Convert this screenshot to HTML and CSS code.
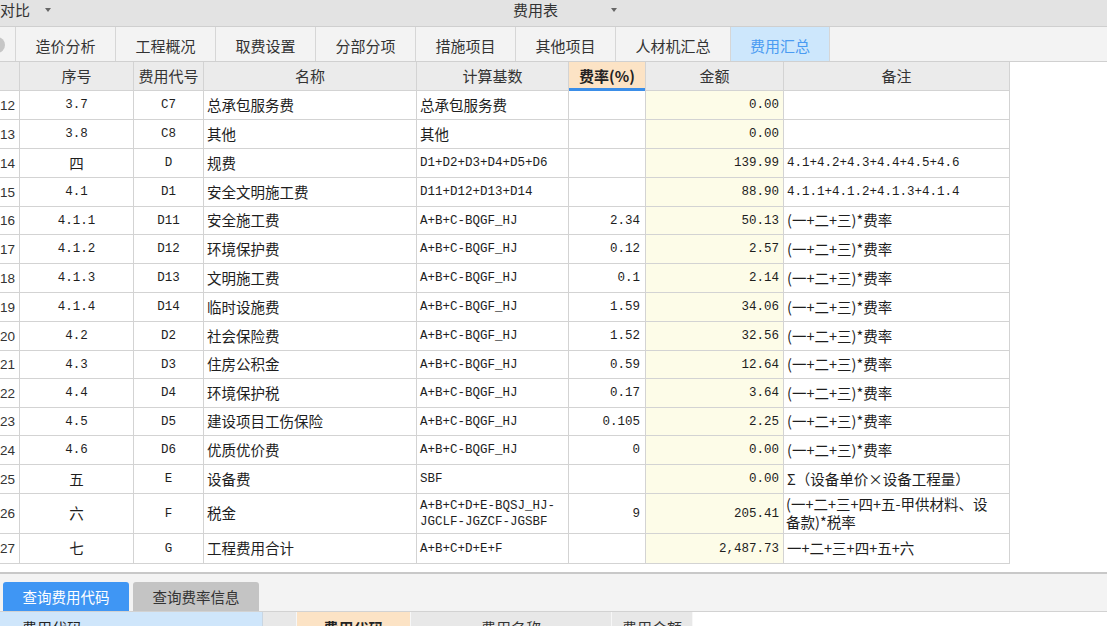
FILE: index.html
```html
<!DOCTYPE html>
<html lang="zh-CN">
<head>
<meta charset="utf-8">
<title>费用汇总</title>
<link rel="stylesheet" href="styles.css">
</head>
<body>
<div class="topbar">
  <div class="tb-sel a"><span>对比</span><i class="caret"></i></div>
  <div class="tb-sel b"><span>费用表</span><i class="caret"></i></div>
</div>
<div class="tabs">
  <div class="knob-cell"><i class="knob"></i></div>
  <div class="tab">造价分析</div>
  <div class="tab">工程概况</div>
  <div class="tab">取费设置</div>
  <div class="tab">分部分项</div>
  <div class="tab">措施项目</div>
  <div class="tab">其他项目</div>
  <div class="tab wide">人材机汇总</div>
  <div class="tab on">费用汇总</div>
</div>
<div class="sheet">
  <div class="h"></div><div class="h">序号</div><div class="h">费用代号</div><div class="h">名称</div><div class="h">计算基数</div><div class="h rate">费率(%)</div><div class="h">金额</div><div class="h">备注</div>

  <div class="n">12</div><div class="ctr m">3.7</div><div class="ctr m">C7</div><div class="l c">总承包服务费</div><div class="l c">总承包服务费</div><div class="r m"></div><div class="r m amt">0.00</div><div class="l c"></div>
  <div class="n">13</div><div class="ctr m">3.8</div><div class="ctr m">C8</div><div class="l c">其他</div><div class="l c">其他</div><div class="r m"></div><div class="r m amt">0.00</div><div class="l c"></div>
  <div class="n">14</div><div class="ctr c">四</div><div class="ctr m">D</div><div class="l c">规费</div><div class="l m">D1+D2+D3+D4+D5+D6</div><div class="r m"></div><div class="r m amt">139.99</div><div class="l m">4.1+4.2+4.3+4.4+4.5+4.6</div>
  <div class="n">15</div><div class="ctr m">4.1</div><div class="ctr m">D1</div><div class="l c">安全文明施工费</div><div class="l m">D11+D12+D13+D14</div><div class="r m"></div><div class="r m amt">88.90</div><div class="l m">4.1.1+4.1.2+4.1.3+4.1.4</div>
  <div class="n">16</div><div class="ctr m">4.1.1</div><div class="ctr m">D11</div><div class="l c">安全施工费</div><div class="l m">A+B+C-BQGF_HJ</div><div class="r m">2.34</div><div class="r m amt">50.13</div><div class="l c">(一+二+三)*费率</div>
  <div class="n">17</div><div class="ctr m">4.1.2</div><div class="ctr m">D12</div><div class="l c">环境保护费</div><div class="l m">A+B+C-BQGF_HJ</div><div class="r m">0.12</div><div class="r m amt">2.57</div><div class="l c">(一+二+三)*费率</div>
  <div class="n">18</div><div class="ctr m">4.1.3</div><div class="ctr m">D13</div><div class="l c">文明施工费</div><div class="l m">A+B+C-BQGF_HJ</div><div class="r m">0.1</div><div class="r m amt">2.14</div><div class="l c">(一+二+三)*费率</div>
  <div class="n">19</div><div class="ctr m">4.1.4</div><div class="ctr m">D14</div><div class="l c">临时设施费</div><div class="l m">A+B+C-BQGF_HJ</div><div class="r m">1.59</div><div class="r m amt">34.06</div><div class="l c">(一+二+三)*费率</div>
  <div class="n">20</div><div class="ctr m">4.2</div><div class="ctr m">D2</div><div class="l c">社会保险费</div><div class="l m">A+B+C-BQGF_HJ</div><div class="r m">1.52</div><div class="r m amt">32.56</div><div class="l c">(一+二+三)*费率</div>
  <div class="n">21</div><div class="ctr m">4.3</div><div class="ctr m">D3</div><div class="l c">住房公积金</div><div class="l m">A+B+C-BQGF_HJ</div><div class="r m">0.59</div><div class="r m amt">12.64</div><div class="l c">(一+二+三)*费率</div>
  <div class="n">22</div><div class="ctr m">4.4</div><div class="ctr m">D4</div><div class="l c">环境保护税</div><div class="l m">A+B+C-BQGF_HJ</div><div class="r m">0.17</div><div class="r m amt">3.64</div><div class="l c">(一+二+三)*费率</div>
  <div class="n">23</div><div class="ctr m">4.5</div><div class="ctr m">D5</div><div class="l c">建设项目工伤保险</div><div class="l m">A+B+C-BQGF_HJ</div><div class="r m">0.105</div><div class="r m amt">2.25</div><div class="l c">(一+二+三)*费率</div>
  <div class="n">24</div><div class="ctr m">4.6</div><div class="ctr m">D6</div><div class="l c">优质优价费</div><div class="l m">A+B+C-BQGF_HJ</div><div class="r m">0</div><div class="r m amt">0.00</div><div class="l c">(一+二+三)*费率</div>
  <div class="n">25</div><div class="ctr c">五</div><div class="ctr m">E</div><div class="l c">设备费</div><div class="l m">SBF</div><div class="r m"></div><div class="r m amt">0.00</div><div class="l c">Σ（设备单价×设备工程量）</div>
  <div class="n">26</div><div class="ctr c">六</div><div class="ctr m">F</div><div class="l c">税金</div><div class="l m wrap"><span>A+B+C+D+E-BQSJ_HJ-<br>JGCLF-JGZCF-JGSBF</span></div><div class="r m">9</div><div class="r m amt">205.41</div><div class="l c wrap"><span>(一+二+三+四+五-甲供材料、设<br>备款)*税率</span></div>
  <div class="n">27</div><div class="ctr c">七</div><div class="ctr m">G</div><div class="l c">工程费用合计</div><div class="l m">A+B+C+D+E+F</div><div class="r m"></div><div class="r m amt">2,487.73</div><div class="l c">一+二+三+四+五+六</div>
</div>
<div class="bottom">
  <div class="btabs">
    <div class="btab on">查询费用代码</div>
    <div class="btab off">查询费率信息</div>
  </div>
  <div class="lower">
    <div class="lpane">费用代码</div>
    <div class="lcell blank"></div>
    <div class="lcell code">费用代码</div>
    <div class="lcell name">费用名称</div>
    <div class="lcell money">费用金额</div>
  </div>
</div>
</body>
</html>
```
FILE: styles.css
```css
* { box-sizing: border-box; }
html, body { margin: 0; padding: 0; background: #fff; }
body {
  width: 1107px;
  height: 626px;
  overflow: hidden;
  font-family: "Noto Sans CJK SC", "Noto Sans", sans-serif;
  color: #1e1e1e;
}

/* top selector bar */
.topbar {
  height: 27px;
  background: #e3e3e3;
  border-bottom: 1px solid #cfcfcf;
  display: flex;
  font-size: 15px;
  line-height: 20px;
  color: #333;
}
.tb-sel { display: flex; align-items: center; height: 20px; }
.tb-sel.a { width: 513px; }
.caret {
  width: 0; height: 0;
  border-left: 3.5px solid transparent;
  border-right: 3.5px solid transparent;
  border-top: 4px solid #666;
}
.tb-sel.a .caret { margin-left: 15px; }
.tb-sel.b .caret { margin-left: 53px; }

/* main tabs */
.tabs {
  display: flex;
  height: 35px;
  background: #f3f3f3;
  border-bottom: 1px solid #d0d0d0;
}
.knob-cell { width: 15px; display: flex; align-items: center; overflow: hidden; padding-top: 1px; }
.knob { flex: none; width: 16px; height: 16px; border-radius: 50%; background: #c6c6c6; margin-left: -11px; }
.tab {
  width: 100px;
  border-left: 1px solid #d6d6d6;
  display: flex;
  align-items: center;
  justify-content: center;
  padding-top: 2px;
  font-size: 15px;
  color: #333;
}
.tab.wide { width: 115px; }
.tab.on { background: #cde7fc; color: #4a9bf2; border-right: 1px solid #d6d6d6; }

/* spreadsheet */
.sheet {
  display: grid;
  grid-template-columns: 19px 113px 69px 212px 151px 76px 137px 225px;
  grid-template-rows: 28px 28px 28px 28px 28px 27px 28px 28px 28px 28px 27px 28px 27px 28px 28px 39px 29px;
  gap: 1px;
  width: 1010px;
  padding: 0 1px 1px 0;
  background: #d3d3d3;
}
.sheet > div {
  background: #fff;
  display: flex;
  align-items: center;
  overflow: hidden;
  white-space: nowrap;
}
.sheet > .h { background: #ebebeb; justify-content: center; font-size: 15px; color: #333; padding-bottom: 1px; }
.sheet > .h.rate { background: #fce3c5; font-weight: bold; color: #222; box-shadow: inset 0 -2px #3b8ee8, 0 1px #3b8ee8; overflow: visible; }
.sheet > .n {
  justify-content: flex-end;
  padding-right: 4px;
  font-family: "Liberation Sans", sans-serif;
  font-size: 13.5px;
  color: #333;
}
.ctr { justify-content: center; }
.l { padding-left: 3px; }
.r { justify-content: flex-end; padding-right: 5px; }
.m { font-family: "Liberation Mono", "Noto Sans CJK SC", monospace; font-size: 12.5px; }
.sheet > .c { font-size: 14.5px; padding-bottom: 2px; }
.sheet > .amt { background: #fdfce8; padding-right: 4px; }
.sheet > .wrap { white-space: normal; line-height: 16px; }
.sheet > .c.wrap { padding-left: 2px; line-height: 18px; padding-bottom: 1px; }

/* bottom panel */
.bottom {
  margin-top: 8px;
  border-top: 2px solid #c8c8c8;
  background: #f3f3f3;
}
.btabs {
  height: 38px;
  display: flex;
  align-items: flex-end;
  gap: 4px;
  padding-left: 3px;
  border-bottom: 1px solid #d2d2d2;
}
.btab {
  width: 126px;
  height: 29px;
  display: flex;
  align-items: center;
  justify-content: center;
  font-size: 14.5px;
  padding-bottom: 1px;
  border-radius: 3px 3px 0 0;
}
.btab.on { background: #3f96f4; color: #fff; }
.btab.off { background: #c4c4c4; color: #333; }
.lower { display: flex; height: 30px; background: #fff; }
.lpane {
  width: 263px;
  background: #cfe6fb;
  border-right: 1px solid #c9d6e2;
  padding-left: 22px;
  display: flex;
  align-items: center;
  font-size: 15px;
  color: #222;
}
.lcell {
  display: flex;
  align-items: center;
  justify-content: center;
  background: #e8e8e8;
  border-right: 1px solid #f7f7f7;
  font-size: 15px;
  color: #333;
}
.lcell.blank { width: 34px; }
.lcell.code { width: 114px; background: #fce3c5; font-weight: bold; color: #222; }
.lcell.name { width: 201px; }
.lcell.money { width: 81px; }
```
